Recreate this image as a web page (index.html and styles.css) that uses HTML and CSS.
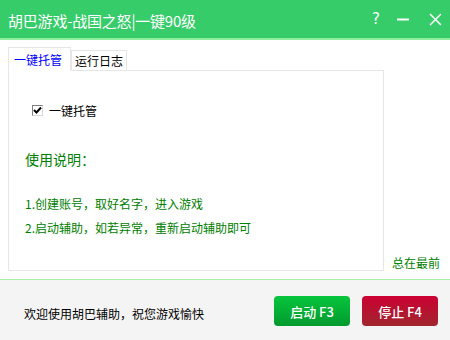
FILE: index.html
```html
<!DOCTYPE html>
<html>
<head>
    <title>胡巴游戏</title>
    <meta charset="utf-8">
    <link rel="stylesheet" href="styles.css">
</head>
<body>
<div class="window">
    <div class="titlebar">
        <div class="title">胡巴游戏-战国之怒|一键90级</div>
        <div class="controls">
            <span class="ctl help">?</span>
            <svg class="ctl" width="13" height="13" viewBox="0 0 13 13"><path d="M0 6.5H12" stroke="#fff" stroke-width="2"/></svg>
            <svg class="ctl" width="13" height="13" viewBox="0 0 13 13"><path d="M1 1L12 12M12 1L1 12" stroke="#fff" stroke-width="1.5"/></svg>
        </div>
    </div>

    <div class="main">
        <div class="tabs-area">
            <div class="tab-list">
                <div class="tab tab-active">一键托管</div>
                <div class="tab">运行日志</div>
            </div>
            <div class="panel">
                <label class="check-row">
                    <span class="checkbox">
                        <svg width="9" height="9" viewBox="0 0 9 9"><path d="M1 4L3.5 6.5L8 1.5" stroke="#000" stroke-width="2" fill="none"/></svg>
                    </span>
                    一键托管
                </label>
                <div class="help-title">使用说明：</div>
                <div class="help-line">1.创建账号，取好名字，进入游戏</div>
                <div class="help-line">2.启动辅助，如若异常，重新启动辅助即可</div>
            </div>
        </div>
        <div class="side">
            <div class="topmost">总在最前</div>
        </div>
    </div>

    <div class="footer">
        <div class="welcome">欢迎使用胡巴辅助，祝您游戏愉快</div>
        <div class="buttons">
            <button class="btn btn-start">启动 F3</button>
            <button class="btn btn-stop">停止 F4</button>
        </div>
    </div>
</div>
</body>
</html>
```

FILE: styles.css
```css
body {
    margin: 0;
    background-color: #FFFFFF;
    font-family: "Noto Sans CJK SC", "DejaVu Sans", sans-serif;
    font-size: 12px;
}

.window {
    width: 450px;
    height: 340px;
    display: flex;
    flex-direction: column;
}

.titlebar {
    height: 38px;
    background-color: #36CC6A;
    border-bottom: 2px solid #8FEF9F;
    display: flex;
    align-items: center;
    justify-content: space-between;
    color: white;
}

.title {
    padding-left: 8px;
    font-size: 15px;
    letter-spacing: -0.2px;
    margin-top: 2px;
}

.controls {
    display: flex;
    align-items: center;
    padding-right: 8px;
}

.ctl {
    margin-left: 19px;
}

.help {
    font-family: "DejaVu Sans", sans-serif;
    font-size: 15px;
    margin-right: -2px;
}

.main {
    flex: 1;
    display: flex;
    padding: 7px 0 0 8px;
}

.tabs-area {
    width: 376px;
    display: flex;
    flex-direction: column;
    margin-bottom: 8px;
}

.tab-list {
    display: flex;
    align-items: flex-end;
    height: 23px;
    border-bottom: 1px solid #E6E6E6;
}

.tab {
    height: 19px;
    line-height: 19px;
    padding: 0 3px;
    border: 1px solid #E6E6E6;
    border-bottom: none;
    color: #000;
}

.tab-active {
    height: 22px;
    line-height: 24px;
    width: 56px;
    padding: 0 0 0 5px;
    color: #0000FF;
    background-color: #fff;
    margin-bottom: -1px;
    border-bottom: 1px solid #fff;
}

.panel {
    flex: 1;
    border: 1px solid #E6E6E6;
    border-top: none;
    padding-left: 16px;
}

.check-row {
    display: flex;
    align-items: center;
    margin-top: 31px;
    margin-left: 7px;
}

.checkbox {
    width: 11px;
    height: 11px;
    box-sizing: border-box;
    border: 1px solid #808080;
    border-right-color: #D8D8D8;
    border-bottom-color: #D8D8D8;
    background-color: #fff;
    display: flex;
    align-items: center;
    justify-content: center;
    margin-right: 6px;
}

.help-title {
    color: #008000;
    font-size: 14px;
    margin-top: 30px;
}

.help-line {
    color: #008000;
    line-height: 24px;
}

.help-title + .help-line {
    margin-top: 23px;
}

.side {
    flex: 1;
    display: flex;
    align-items: flex-end;
    padding-left: 8px;
    padding-bottom: 8px;
}

.topmost {
    color: #008000;
}

.footer {
    height: 60px;
    background-color: #F4F4F4;
    border-top: 1px solid #A8F0A8;
    display: flex;
    align-items: center;
    justify-content: space-between;
    padding: 0 12px 0 24px;
}

.welcome {
    color: #000;
    margin-top: 6px;
}

.buttons {
    display: flex;
    gap: 12px;
    margin-top: 2px;
}

.btn {
    width: 76px;
    height: 30px;
    border: none;
    border-radius: 4px;
    color: white;
    font-family: "Noto Sans CJK SC", "DejaVu Sans", sans-serif;
    font-size: 13px;
    font-weight: 500;
}

.btn-start {
    background: linear-gradient(#07C53C, #029A2E);
}

.btn-stop {
    background: linear-gradient(#CC0033, #A0262E);
}
```
